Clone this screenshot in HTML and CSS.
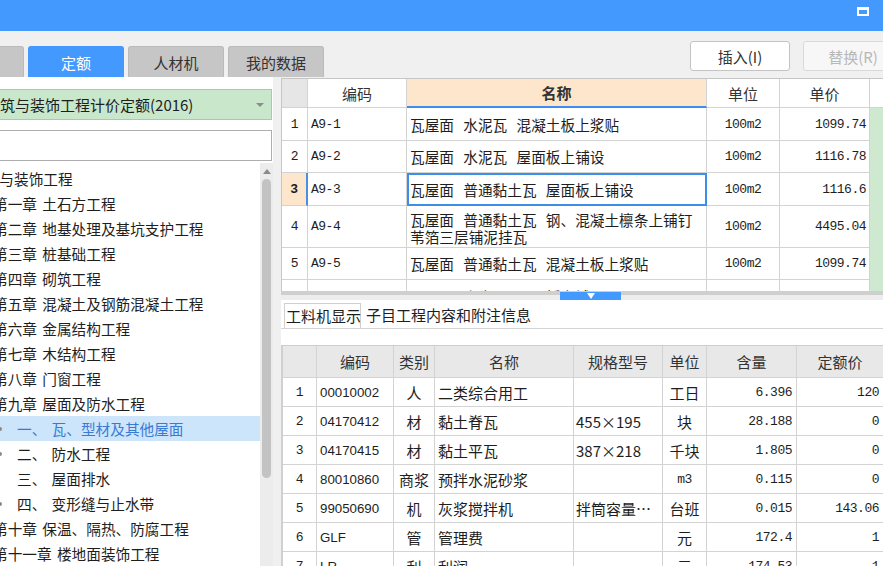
FILE: index.html
```html
<!DOCTYPE html>
<html lang="zh-CN">
<head>
<meta charset="utf-8">
<title>定额</title>
<link rel="stylesheet" href="styles.css">
</head>
<body>
<div class="app">
  <header class="titlebar"><span class="max-icon"></span></header>
  <div class="toolbar">
    <nav class="tabs">
      <span class="tab">清单</span>
      <span class="tab active">定额</span>
      <span class="tab">人材机</span>
      <span class="tab">我的数据</span>
    </nav>
    <div class="actions">
      <button class="btn">插入(I)</button>
      <button class="btn disabled">替换(R)</button>
    </div>
  </div>
  <div class="main">
    <aside class="left">
      <div class="select"><span>建筑与装饰工程计价定额(2016)</span><span class="caret"></span></div>
      <div class="search"></div>
      <div class="tree-wrap">
        <ul class="tree">
          <li class="lv0">建筑与装饰工程</li>
          <li class="lv1">第一章 土石方工程</li>
          <li class="lv1">第二章 地基处理及基坑支护工程</li>
          <li class="lv1">第三章 桩基础工程</li>
          <li class="lv1">第四章 砌筑工程</li>
          <li class="lv1">第五章 混凝土及钢筋混凝土工程</li>
          <li class="lv1">第六章 金属结构工程</li>
          <li class="lv1">第七章 木结构工程</li>
          <li class="lv1">第八章 门窗工程</li>
          <li class="lv1">第九章 屋面及防水工程</li>
          <li class="lv2 has-child selected">一、 瓦、型材及其他屋面</li>
          <li class="lv2 has-child">二、 防水工程</li>
          <li class="lv2">三、 屋面排水</li>
          <li class="lv2 has-child">四、 变形缝与止水带</li>
          <li class="lv1">第十章 保温、隔热、防腐工程</li>
          <li class="lv1">第十一章 楼地面装饰工程</li>
          <li class="lv1">第十二章 墙柱面装饰与隔断、幕墙工程</li>
        </ul>
        <div class="vscroll"><span class="up"></span><span class="thumb"></span></div>
      </div>
    </aside>
    <div class="gap"></div>
    <section class="right">
      <div class="upper">
        <div class="grid1">
          <div class="c hd rn"></div>
          <div class="c hd ctr">编码</div>
          <div class="c hd ctr name-hd">名称</div>
          <div class="c hd ctr">单位</div>
          <div class="c hd ctr">单价</div>
          <div class="c hd gr-hd"></div>

          <div class="c ctr mono">1</div>
          <div class="c mono">A9-1</div>
          <div class="c nm">瓦屋面 水泥瓦 混凝土板上浆贴</div>
          <div class="c ctr mono">100m2</div>
          <div class="c rt mono">1099.74</div>
          <div class="c gr"></div>

          <div class="c ctr mono">2</div>
          <div class="c mono">A9-2</div>
          <div class="c nm">瓦屋面 水泥瓦 屋面板上铺设</div>
          <div class="c ctr mono">100m2</div>
          <div class="c rt mono">1116.78</div>
          <div class="c gr"></div>

          <div class="c ctr mono rn-sel">3</div>
          <div class="c mono">A9-3</div>
          <div class="c nm cur">瓦屋面 普通黏土瓦 屋面板上铺设</div>
          <div class="c ctr mono">100m2</div>
          <div class="c rt mono">1116.6</div>
          <div class="c gr"></div>

          <div class="c ctr mono">4</div>
          <div class="c mono">A9-4</div>
          <div class="c nm two">瓦屋面 普通黏土瓦 钢、混凝土檩条上铺钉<br>苇箔三层铺泥挂瓦</div>
          <div class="c ctr mono">100m2</div>
          <div class="c rt mono">4495.04</div>
          <div class="c gr"></div>

          <div class="c ctr mono">5</div>
          <div class="c mono">A9-5</div>
          <div class="c nm">瓦屋面 普通黏土瓦 混凝土板上浆贴</div>
          <div class="c ctr mono">100m2</div>
          <div class="c rt mono">1099.74</div>
          <div class="c gr"></div>

          <div class="c ctr mono">6</div>
          <div class="c mono">A9-6</div>
          <div class="c nm">瓦屋面 小青瓦 屋面板上铺设</div>
          <div class="c ctr mono">100m2</div>
          <div class="c rt mono">1033.15</div>
          <div class="c gr"></div>
        </div>
      </div>
      <div class="splitter"><span class="handle"><span class="tri"></span></span></div>
      <div class="lower">
        <div class="subtabs">
          <span class="subtab active">工料机显示</span>
          <span class="subtab">子目工程内容和附注信息</span>
        </div>
        <div class="grid2">
          <div class="c hd"></div>
          <div class="c hd ctr">编码</div>
          <div class="c hd ctr">类别</div>
          <div class="c hd ctr">名称</div>
          <div class="c hd ctr">规格型号</div>
          <div class="c hd ctr">单位</div>
          <div class="c hd ctr">含量</div>
          <div class="c hd ctr">定额价</div>

          <div class="c ctr mono">1</div>
          <div class="c code">00010002</div>
          <div class="c ctr">人</div>
          <div class="c nm">二类综合用工</div>
          <div class="c spec"></div>
          <div class="c ctr">工日</div>
          <div class="c rt2 mono">6.396</div>
          <div class="c rt3 mono">120</div>

          <div class="c ctr mono">2</div>
          <div class="c code">04170412</div>
          <div class="c ctr">材</div>
          <div class="c nm">黏土脊瓦</div>
          <div class="c spec">455×195</div>
          <div class="c ctr">块</div>
          <div class="c rt2 mono">28.188</div>
          <div class="c rt3 mono">0</div>

          <div class="c ctr mono">3</div>
          <div class="c code">04170415</div>
          <div class="c ctr">材</div>
          <div class="c nm">黏土平瓦</div>
          <div class="c spec">387×218</div>
          <div class="c ctr">千块</div>
          <div class="c rt2 mono">1.805</div>
          <div class="c rt3 mono">0</div>

          <div class="c ctr mono">4</div>
          <div class="c code">80010860</div>
          <div class="c ctr">商浆</div>
          <div class="c nm">预拌水泥砂浆</div>
          <div class="c spec"></div>
          <div class="c ctr mono">m3</div>
          <div class="c rt2 mono">0.115</div>
          <div class="c rt3 mono">0</div>

          <div class="c ctr mono">5</div>
          <div class="c code">99050690</div>
          <div class="c ctr">机</div>
          <div class="c nm">灰浆搅拌机</div>
          <div class="c spec">拌筒容量…</div>
          <div class="c ctr">台班</div>
          <div class="c rt2 mono">0.015</div>
          <div class="c rt3 mono">143.06</div>

          <div class="c ctr mono">6</div>
          <div class="c code">GLF</div>
          <div class="c ctr">管</div>
          <div class="c nm">管理费</div>
          <div class="c spec"></div>
          <div class="c ctr">元</div>
          <div class="c rt2 mono">172.4</div>
          <div class="c rt3 mono">1</div>

          <div class="c ctr mono">7</div>
          <div class="c code">LR</div>
          <div class="c ctr">利</div>
          <div class="c nm">利润</div>
          <div class="c spec"></div>
          <div class="c ctr">元</div>
          <div class="c rt2 mono">174.53</div>
          <div class="c rt3 mono">1</div>
        </div>
      </div>
    </section>
  </div>
</div>
</body>
</html>
```
FILE: styles.css
```css
* { box-sizing: border-box; margin: 0; padding: 0; }
html, body { width: 883px; height: 566px; overflow: hidden; }
body {
  font-family: "Noto Sans CJK SC", "Microsoft YaHei", sans-serif;
  font-size: 14.67px;
  color: #1e1e1e;
  background: #f0f0f0;
}
.app { display: flex; flex-direction: column; height: 566px; }

.titlebar {
  height: 31px; flex: none;
  background: #4499ff;
  display: flex; justify-content: flex-end; align-items: flex-start;
  padding: 7px 14px 0 0;
}
.max-icon { width: 12px; height: 9px; border: 2px solid #fff; border-top-width: 3px; }

.toolbar { height: 46px; flex: none; display: flex; justify-content: space-between; }
.tabs { display: flex; align-items: flex-end; gap: 4px; margin-left: -72px; }
.tab {
  width: 96px; height: 31px;
  display: flex; align-items: center; justify-content: center;
  background: #c6c6c6; border: 1px solid #bababa; border-bottom: none;
  border-radius: 3px 3px 0 0;
  color: #333; font-size: 15px;
}
.tab.active { background: #4499ff; border-color: #4499ff; color: #fff; }
.actions { display: flex; gap: 13px; padding-top: 10px; margin-right: -20px; }
.btn {
  width: 100px; height: 30px;
  background: #fff; border: 1px solid #c4c4c4; border-radius: 3px;
  font-family: inherit; font-size: 15px; color: #333;
}
.btn.disabled { background: #f7f7f7; color: #b8b8b8; border-color: #d9d9d9; }

.main { flex: 1; display: flex; min-height: 0; }

.left {
  width: 313px; margin-left: -40px; flex: none;
  background: #fff;
  display: flex; flex-direction: column; overflow: hidden;
}
.select {
  margin-top: 12px; width: 312px; height: 31px; flex: none;
  border: 1px solid #b4c2b4; background: #c9e7cb;
  display: flex; align-items: center;
  padding-left: 24px; font-size: 15px; white-space: nowrap;
}
.caret {
  margin-left: auto; margin-right: 7px;
  border-top: 4px solid #8c8c8c;
  border-left: 4px solid transparent; border-right: 4px solid transparent;
}
.search { margin-top: 10px; width: 312px; height: 31px; flex: none; border: 1px solid #adadad; background: #fff; }
.tree-wrap { margin-top: 2px; flex: 1; display: flex; min-height: 0; }
.tree { flex: 1; list-style: none; padding-top: 3px; overflow: hidden; }
.tree li {
  height: 25px; line-height: 25px; white-space: nowrap;
  word-spacing: 2px; position: relative; color: #1e1e1e;
}
.tree .lv0 { padding-left: 10px; }
.tree .lv1 { padding-left: 33px; }
.tree .lv2 { padding-left: 57px; }
.tree .has-child::before {
  content: ""; position: absolute; left: 38px; top: 11px;
  width: 4px; height: 4px; border-radius: 2px; background: #888;
}
.tree .selected { background: #cce5fb; color: #3a7ad4; }
.vscroll {
  width: 13px; flex: none; background: #ececec;
  display: flex; flex-direction: column; align-items: center; padding-top: 6px;
}
.vscroll .up {
  border-bottom: 5px solid #8a8a8a;
  border-left: 4px solid transparent; border-right: 4px solid transparent;
}
.vscroll .thumb { margin-top: 5px; width: 9px; height: 299px; border-radius: 5px; background: #c3c3c3; }

.gap { width: 8px; flex: none; }

.right { flex: 1; display: flex; flex-direction: column; min-width: 0; }

.upper { height: 214px; flex: none; padding-top: 1px; overflow: hidden; }
.grid1 {
  display: grid;
  grid-template-columns: 26px 99px 300px 73px 90px 1fr;
  grid-template-rows: 29px 33px 32px 33px 42px 32px 33px;
  border-left: 1px solid #c6c6c6; border-top: 1px solid #c6c6c6;
  background: #fff;
}
.c {
  border-right: 1px solid #d3d3d3; border-bottom: 1px solid #d3d3d3;
  display: flex; align-items: center;
  padding: 0 3px; white-space: nowrap; overflow: hidden;
  background: #fff;
}
.hd { font-size: 15px; color: #333; }
.ctr { justify-content: center; }
.rt { justify-content: flex-end; }
.grid1 .rn { background: #e6e6e6; }
.name-hd { background: #fde6cb; font-weight: bold; border-bottom: 2px solid #3d8ef0; }
.gr-hd { border-right: none; }
.gr { background: #cfe9d1; border-bottom: none; border-right: none; }
.mono { font-family: "Liberation Mono", monospace; font-size: 13px; letter-spacing: -0.5px; }
.grid1 .nm { word-spacing: 6px; }
.two { line-height: 17px; padding-top: 3px; }
.rn-sel { background: #fde6cb; font-weight: bold; border-right: 2px solid #4a90e2; }
.cur { outline: 2px solid #3c8ee8; outline-offset: -2px; }

.splitter {
  height: 9px; flex: none;
  background: linear-gradient(#cfcfcf 0 4px, #ededed 4px);
  display: flex;
}
.handle {
  margin-left: 279px; margin-top: 1px; width: 61px; height: 8px;
  background: #4499ff;
  display: flex; justify-content: center; align-items: center;
}
.tri {
  border-top: 6px solid #fff;
  border-left: 4px solid transparent; border-right: 4px solid transparent;
}

.lower { flex: 1; background: #fff; overflow: hidden; }
.subtabs {
  height: 29px; display: flex; align-items: flex-end;
  padding-left: 3px; border-bottom: 1px solid #d4d4d4;
}
.subtab { font-size: 15px; height: 25px; line-height: 24px; white-space: nowrap; }
.subtab.active { width: 77px; padding-left: 1px; border: 1px solid #d0d0d0; border-bottom: none; background: #fff; }
.subtab + .subtab { margin-left: 5px; }

.grid2 {
  margin-top: 16px;
  display: grid;
  grid-template-columns: 34px 77px 41px 139px 89px 44px 90px 87px;
  grid-template-rows: 32px repeat(7, 29px);
  border-left: 2px solid #d0d0d0; border-top: 1px solid #cdcdcd;
}
.grid2 .c { font-size: 15px; }
.grid2 .hd { background: #e8e8e8; }
.grid2 .mono { font-size: 13px; }
.code { font-family: "Liberation Sans", sans-serif; font-size: 13.3px !important; padding-left: 3px; }
.spec { padding-left: 2px; }
.rt2 { justify-content: flex-end; padding-right: 4px; }
.rt3 { justify-content: flex-end; padding-right: 4px; }
```
